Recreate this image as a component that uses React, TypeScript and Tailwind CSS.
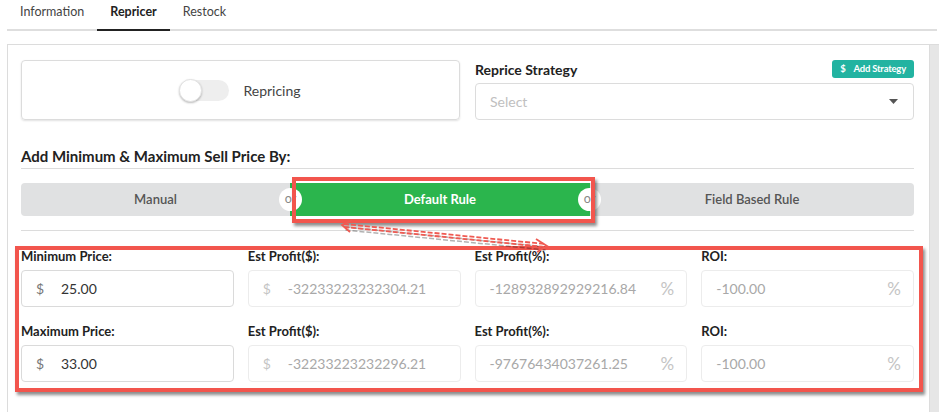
import React from 'react';

const fieldRows = [
  {
    label: 'Minimum Price:',
    price: '25.00',
    profit: '-32233223232304.21',
    percent: '-128932892929216.84',
    roi: '-100.00',
  },
  {
    label: 'Maximum Price:',
    price: '33.00',
    profit: '-32233223232296.21',
    percent: '-97676434037261.25',
    roi: '-100.00',
  },
];

function Field({ label, children }: { label: string; children: React.ReactNode }) {
  return (
    <div>
      <div className="text-[13px] font-bold leading-4 text-[#222] mb-[6px] mt-[1px]">{label}</div>
      {children}
    </div>
  );
}

export default function App() {
  return (
    <div
      className="relative w-[939px] h-[412px] overflow-hidden bg-white"
      style={{ fontFamily: 'Lato, "Open Sans", sans-serif' }}
    >
      {/* Top tabs */}
      <div className="ml-[7px] mr-[2px] flex h-[31px] border-b-2 border-[#dedede]">
        {['Information', 'Repricer', 'Restock'].map((t) => (
          <div
            key={t}
            className={
              t === 'Repricer'
                ? 'px-[13px] pt-[4px] text-[12.5px] leading-4 font-bold text-[#222] border-b-2 border-[#222] -mb-[2px]'
                : 'px-[13px] pt-[4px] text-[12.5px] leading-4 text-[#444]'
            }
          >
            {t}
          </div>
        ))}
      </div>

      {/* Panel */}
      <div className="ml-[7px] mt-[13px] flex border-t border-l border-[#dcdcdc] h-[400px]">
        <div className="w-[921px] pl-[13px] pr-[15px] pt-[15px]">
          {/* Repricing + strategy */}
          <div className="grid grid-cols-2 gap-[15px]">
            <div className="h-[60px] rounded-[4px] border border-[#dcdcdc] shadow-[0_1px_2px_rgba(0,0,0,0.12)] flex items-center justify-center gap-[14px]">
              <div className="relative w-[49px] h-[21px] rounded-full bg-[#eeeeee]">
                <div className="absolute -left-[1px] -top-[1px] w-[23px] h-[23px] rounded-full bg-white border border-[#e2e2e2] shadow-[0_1px_2px_rgba(0,0,0,0.25)]" />
              </div>
              <span className="text-[14px] text-[#444]">Repricing</span>
            </div>
            <div>
              <div className="flex items-center justify-between h-[18px] mb-[5px]">
                <span className="text-[14px] font-bold text-[#222]">Reprice Strategy</span>
                <button className="h-[18px] px-[8px] rounded-[3px] bg-[#22b3a1] text-white text-[9.5px] font-bold flex items-center gap-[8px] tracking-[-0.2px]">
                  <span>$</span>
                  <span>Add Strategy</span>
                </button>
              </div>
              <div className="h-[37px] rounded-[4px] border border-[#dcdcdc] flex items-center justify-between pl-[14px] pr-[15px]">
                <span className="text-[14px] text-[#c0c0c0]">Select</span>
                <svg width="9" height="5" viewBox="0 0 9 5">
                  <path d="M0 0h9L4.5 5z" fill="#555" />
                </svg>
              </div>
            </div>
          </div>

          {/* Heading */}
          <div className="mt-[26px] pb-[2px] border-b border-[#dcdcdc] text-[15px] leading-5 font-bold text-[#222]">
            Add Minimum &amp; Maximum Sell Price By:
          </div>

          {/* Rule selector */}
          <div className="mt-[14px] flex h-[33px] rounded-[4px] bg-[#e0e1e2] text-[13px] font-semibold">
            <div className="relative w-[269px] flex items-center justify-center pt-[1px] text-[#555]">
              Manual
            </div>
            <div className="relative w-[300px] flex items-center justify-center pt-[1px] bg-[#2bb54d] text-white font-bold">
              Default Rule
              <div className="absolute -left-[11px] top-[5px] w-[23px] h-[23px] rounded-full bg-white flex items-center justify-center text-[12.5px] font-normal text-[#888]">
                or
              </div>
              <div className="absolute -right-[11px] top-[5px] w-[23px] h-[23px] rounded-full bg-white flex items-center justify-center text-[12.5px] font-normal text-[#888]">
                or
              </div>
            </div>
            <div className="flex-1 flex items-center justify-center pt-[1px] text-[#555]">Field Based Rule</div>
          </div>

          <div className="mt-[14px] border-b border-[#dcdcdc]" />

          {/* Price fields */}
          <div className="mt-[16px] flex flex-col gap-[15px]">
            {fieldRows.map((r) => (
              <div key={r.label} className="grid grid-cols-4 gap-x-[14px]">
                <Field label={r.label}>
                  <div className="h-[37px] rounded-[4px] border border-[#dadada] flex items-center px-[14px] text-[14px]">
                    <span className="text-[#777] w-[25px]">$</span>
                    <span className="text-[#333]">{r.price}</span>
                  </div>
                </Field>
                <Field label="Est Profit($):">
                  <div className="h-[37px] rounded-[4px] border border-[#ececec] flex items-center px-[14px] text-[14px]">
                    <span className="text-[#c4c4c4] w-[25px]">$</span>
                    <span className="text-[#a8a8a8]">{r.profit}</span>
                  </div>
                </Field>
                <Field label="Est Profit(%):">
                  <div className="h-[37px] rounded-[4px] border border-[#ececec] flex items-center justify-between pl-[14px] pr-[12px] text-[14px]">
                    <span className="text-[#a8a8a8]">{r.percent}</span>
                    <span className="text-[#c4c4c4] text-[17px]">%</span>
                  </div>
                </Field>
                <Field label="ROI:">
                  <div className="h-[37px] rounded-[4px] border border-[#ececec] flex items-center justify-between pl-[14px] pr-[12px] text-[14px]">
                    <span className="text-[#a8a8a8]">{r.roi}</span>
                    <span className="text-[#c4c4c4] text-[17px]">%</span>
                  </div>
                </Field>
              </div>
            ))}
          </div>
        </div>
        <div className="flex-1 bg-[#e6e6e6] border-l border-[#dcdcdc]" />
      </div>

      {/* Annotation: box around Default Rule */}
      <div className="absolute left-[292px] top-[177px] w-[303px] h-[46px] border-4 border-[#f2554d] shadow-[2px_3px_3px_rgba(0,0,0,0.45)]" />

      {/* Annotation: box around price fields */}
      <div className="absolute left-[15px] top-[246px] w-[908px] h-[146px] border-4 border-[#f2554d] shadow-[2px_3px_3px_rgba(0,0,0,0.45)]" />

      {/* Annotation: dashed double arrow */}
      <svg className="absolute left-[330px] top-[215px]" width="230" height="40" viewBox="0 0 230 40">
        <g transform="translate(1.5,2)" stroke="rgba(0,0,0,0.3)" fill="none" strokeWidth="1.5">
          <path d="M14 10 L215 30" strokeDasharray="5 2" />
          <path d="M14 13 L215 33" strokeDasharray="5 2" />
        </g>
        <g stroke="#ef5a52" fill="none" strokeWidth="1.8">
          <path d="M14 9 L215 29" strokeDasharray="5 2" />
          <path d="M14 12 L215 32" strokeDasharray="5 2" />
          <path d="M22 5 L12 10 L20 17" />
          <path d="M206 24 L217 31 L207 37" />
        </g>
      </svg>
    </div>
  );
}
